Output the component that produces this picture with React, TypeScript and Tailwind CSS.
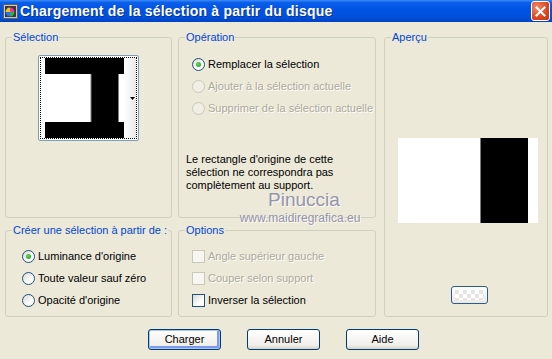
import React from 'react';

const font = "font-['Liberation_Sans',Arial,sans-serif]";

const Radio = ({ checked, disabled }: { checked?: boolean; disabled?: boolean }) => (
    <span
        className={
            disabled
                ? 'flex h-[13px] w-[13px] shrink-0 items-center justify-center rounded-full border border-[#cac8bb] bg-[#f0eee5]'
                : 'flex h-[13px] w-[13px] shrink-0 items-center justify-center rounded-full border border-[#1c5180] bg-[linear-gradient(135deg,#dcd9cf,#ffffff_70%)]'
        }
    >
        {checked && <span className="h-[5px] w-[5px] rounded-full bg-[radial-gradient(circle_at_40%_40%,#5ed85e,#1a981a)]" />}
    </span>
);

const Check = ({ disabled }: { disabled?: boolean }) => (
    <span
        className={
            disabled
                ? 'h-[13px] w-[13px] shrink-0 border border-[#cac8bb] bg-[#f7f6f1]'
                : 'h-[13px] w-[13px] shrink-0 border border-[#1c5180] bg-[linear-gradient(135deg,#dcd9cf,#ffffff_70%)]'
        }
    />
);

const Group = ({ title, className, children }: { title: string; className: string; children?: React.ReactNode }) => (
    <fieldset className={`rounded-[3px] border border-[#d0d0bf] ${className}`}>
        <legend className="ml-[6px] px-[1px] text-[11px] leading-[13px] text-[#0046d5]">{title}</legend>
        {children}
    </fieldset>
);

const Option = ({ label, checked, disabled, box }: { label: string; checked?: boolean; disabled?: boolean; box?: boolean }) => (
    <div className="flex h-[22px] items-center whitespace-nowrap">
        {box ? <Check disabled={disabled} /> : <Radio checked={checked} disabled={disabled} />}
        <span
            className={
                disabled
                    ? 'ml-[3px] text-[11px] text-[#aca899] [text-shadow:1px_1px_#ffffff]'
                    : 'ml-[3px] text-[11px] text-black'
            }
        >
            {label}
        </span>
    </div>
);

const XpButton = ({ label, primary }: { label: string; primary?: boolean }) => (
    <button
        className={
            primary
                ? 'h-[21px] w-[73px] rounded-[3px] border border-[#003c74] bg-[linear-gradient(#ffffff,#f0efea_80%,#d8d2c6)] text-[11px] text-black shadow-[inset_0_0_0_1px_#a9c6f7,inset_-1px_-1px_0_2px_#7d98ec]'
                : 'h-[21px] w-[73px] rounded-[3px] border border-[#003c74] bg-[linear-gradient(#ffffff,#f0efea_80%,#d8d2c6)] text-[11px] text-black'
        }
    >
        {label}
    </button>
);

const App: React.FC = () => {
    return (
        <div className={`relative h-[359px] w-[552px] overflow-hidden bg-[#ece9d8] ${font}`}>
            {/* title bar */}
            <div className="flex h-[22px] items-center bg-[linear-gradient(#3b8cf8,#0a5de9_12%,#0054e3_45%,#0050da_80%,#0042c2)] pl-[3px] pr-[2px]">
                <svg width="15" height="15" viewBox="0 0 15 15">
                    <rect x="0.5" y="0.5" width="14" height="14" fill="#c9c9c9" stroke="#606060" />
                    <rect x="2" y="2" width="11" height="11" fill="#3a3a3a" />
                    <circle cx="7" cy="8" r="4.5" fill="#1b1b1b" />
                    <path d="M7 8 L7 3.5 A4.5 4.5 0 0 1 11.5 8 Z" fill="#e23c9a" />
                    <path d="M7 8 L11.5 8 A4.5 4.5 0 0 1 7 12.5 Z" fill="#2bb24a" />
                    <path d="M7 8 L7 12.5 A4.5 4.5 0 0 1 2.5 8 Z" fill="#2f6fe0" />
                    <path d="M7 8 L2.5 8 A4.5 4.5 0 0 1 7 3.5 Z" fill="#f2c230" />
                </svg>
                <span className="ml-[2px] text-[14px] font-bold tracking-[0.2px] text-white [text-shadow:1px_1px_#0b2f9c]">
                    Chargement de la sélection à partir du disque
                </span>
                <div className="ml-auto flex h-[20px] w-[19px] items-center justify-center rounded-[3px] border border-white bg-[radial-gradient(circle_at_30%_30%,#f08a6a,#e0451b_60%,#c8350f)]">
                    <svg width="11" height="11" viewBox="0 0 11 11">
                        <path d="M1.5 1.5 L9.5 9.5 M9.5 1.5 L1.5 9.5" stroke="white" strokeWidth="2" strokeLinecap="square" />
                    </svg>
                </div>
            </div>

            {/* body */}
            <div className="flex pl-[5px] pt-[9px]">
                <div className="flex w-[167px] flex-col gap-[6px]">
                    <Group title="Sélection" className="h-[187px]">
                        <div className="ml-[32px] mt-[11px] h-[86px] w-[101px] rounded-[2px] border border-[#7f9db9] bg-white p-[1px]">
                            <div className="flex h-full w-full border border-dotted border-black pl-[4px]">
                                <svg width="79" height="80" viewBox="0 0 79 80" className="shrink-0">
                                    <rect width="79" height="80" fill="#ffffff" />
                                    <rect x="0" y="0" width="79" height="16" fill="#000000" />
                                    <rect x="0" y="64" width="79" height="16" fill="#000000" />
                                    <rect x="46" y="0" width="27" height="80" fill="#000000" />
                                    <rect x="45.5" y="16" width="1" height="48" fill="#808080" />
                                    <rect x="73" y="16" width="1" height="48" fill="#808080" />
                                </svg>
                                <div className="relative flex-1 bg-[linear-gradient(90deg,#ffffff,#e8e8e8)]">
                                    <svg width="5" height="3" viewBox="0 0 5 3" className="absolute right-[1px] top-[39px]">
                                        <path d="M0 0 H5 L2.5 3 Z" fill="#000000" />
                                    </svg>
                                </div>
                            </div>
                        </div>
                    </Group>
                    <Group title="Créer une sélection à partir de :" className="h-[93px]">
                        <div className="mt-[8px] pl-[16px]">
                            <Option label="Luminance d'origine" checked />
                            <Option label="Toute valeur sauf zéro" />
                            <Option label="Opacité d'origine" />
                        </div>
                    </Group>
                </div>

                <div className="ml-[6px] flex w-[198px] flex-col gap-[6px]">
                    <Group title="Opération" className="h-[187px]">
                        <div className="mt-[9px] pl-[13px]">
                            <Option label="Remplacer la sélection" checked />
                            <Option label="Ajouter à la sélection actuelle" disabled />
                            <Option label="Supprimer de la sélection actuelle" disabled />
                        </div>
                        <p className="mt-[34px] pl-[7px] text-[11px] leading-[13px] text-black">
                            Le rectangle d'origine de cette
                            <br />
                            sélection ne correspondra pas
                            <br />
                            complètement au support.
                        </p>
                    </Group>
                    <Group title="Options" className="h-[93px]">
                        <div className="mt-[8px] pl-[13px]">
                            <Option label="Angle supérieur gauche" box disabled />
                            <Option label="Couper selon support" box disabled />
                            <Option label="Inverser la sélection" box />
                        </div>
                    </Group>
                </div>

                <Group title="Aperçu" className="ml-[8px] h-[286px] w-[164px]">
                    <div className="ml-[13px] mt-[94px] flex h-[85px] w-[140px]">
                        <div className="w-[82px] bg-white" />
                        <div className="w-[48px] border-l border-[#7a7a7a] bg-black" />
                        <div className="w-[10px] bg-white" />
                    </div>
                    <div className="ml-[66px] mt-[63px] h-[18px] w-[37px] rounded-[3px] border border-[#2c5b91] bg-[linear-gradient(#ffffff,#ece9e0)] p-[3px]">
                        <div className="h-full w-full bg-[repeating-conic-gradient(#ffffff_0_25%,#e4e4e4_0_50%)] bg-[length:8px_8px]" />
                    </div>
                </Group>
            </div>

            {/* buttons */}
            <div className="mt-[12px] flex gap-[26px] pl-[148px]">
                <XpButton label="Charger" primary />
                <XpButton label="Annuler" />
                <XpButton label="Aide" />
            </div>

            {/* watermark */}
            <div className="absolute left-[238px] top-[190px] flex w-[124px] flex-col items-center leading-none text-[#8c8ca6] opacity-90">
                <span className="pl-[8px] text-[19px] [text-shadow:1px_1px_#ffffff]">Pinuccia</span>
                <span className="mt-[3px] text-[12px] [text-shadow:1px_1px_#ffffff]">www.maidiregrafica.eu</span>
            </div>
        </div>
    );
};

export default App;
